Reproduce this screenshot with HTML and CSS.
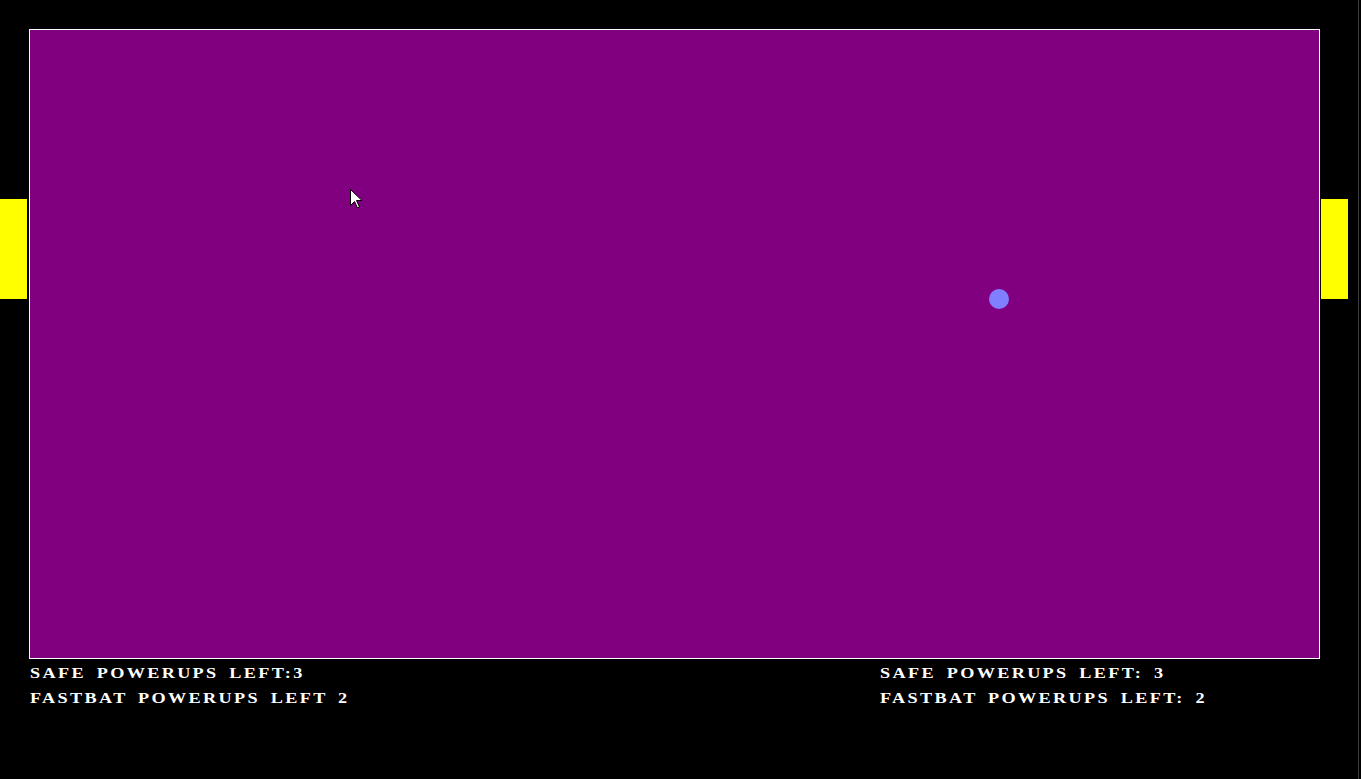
FILE: index.html
```html
<!DOCTYPE html>
<html>
<head>
<meta charset="utf-8">
<title>Pong</title>
<link rel="stylesheet" href="styles.css">
</head>
<body>
<div class="stage">
  <div class="board"></div>
  <div class="hud">
    <div class="panel">
      <div class="line">SAFE POWERUPS LEFT:3</div>
      <div class="line">FASTBAT POWERUPS LEFT 2</div>
    </div>
    <div class="panel">
      <div class="line">SAFE POWERUPS LEFT: 3</div>
      <div class="line">FASTBAT POWERUPS LEFT: 2</div>
    </div>
  </div>
  <div class="paddle paddle-left"></div>
  <div class="paddle paddle-right"></div>
  <div class="ball"></div>
  <svg class="cursor" width="13" height="20" viewBox="0 0 13 20">
    <path d="M0.5 0.5 L0.5 16.5 L4.5 12.5 L7.5 19 L9.5 18 L6.5 11.5 L12 11.5 Z" fill="#fff" stroke="#000" stroke-width="1"/>
  </svg>
</div>
</body>
</html>
```
FILE: styles.css
```css
html, body {
  margin: 0;
  padding: 0;
  background: #000;
}
.stage {
  position: relative;
  width: 1358px;
  height: 779px;
  border-right: 1px solid #3c3c3c;
  overflow: hidden;
}
.board {
  margin: 29px 0 0 29px;
  width: 1289px;
  height: 628px;
  border: 1px solid #fff;
  background: #800080;
}
.hud {
  display: grid;
  grid-template-columns: 850px auto;
  padding-left: 30px;
  padding-top: 2px;
}
.line {
  font-family: "Liberation Serif", "Times New Roman", serif;
  font-weight: bold;
  font-size: 14px;
  line-height: 25px;
  letter-spacing: 1.8px;
  word-spacing: 3px;
  color: #fff;
  white-space: nowrap;
  transform: scaleX(1.3);
  transform-origin: 0 50%;
}
.paddle {
  position: absolute;
  top: 199px;
  width: 27px;
  height: 100px;
  background: #ffff00;
}
.paddle-left { left: 0; }
.paddle-right { left: 1321px; }
.ball {
  position: absolute;
  left: 989px;
  top: 289px;
  width: 20px;
  height: 20px;
  border-radius: 50%;
  background: #8080ff;
}
.cursor {
  position: absolute;
  left: 350px;
  top: 189px;
}
```
